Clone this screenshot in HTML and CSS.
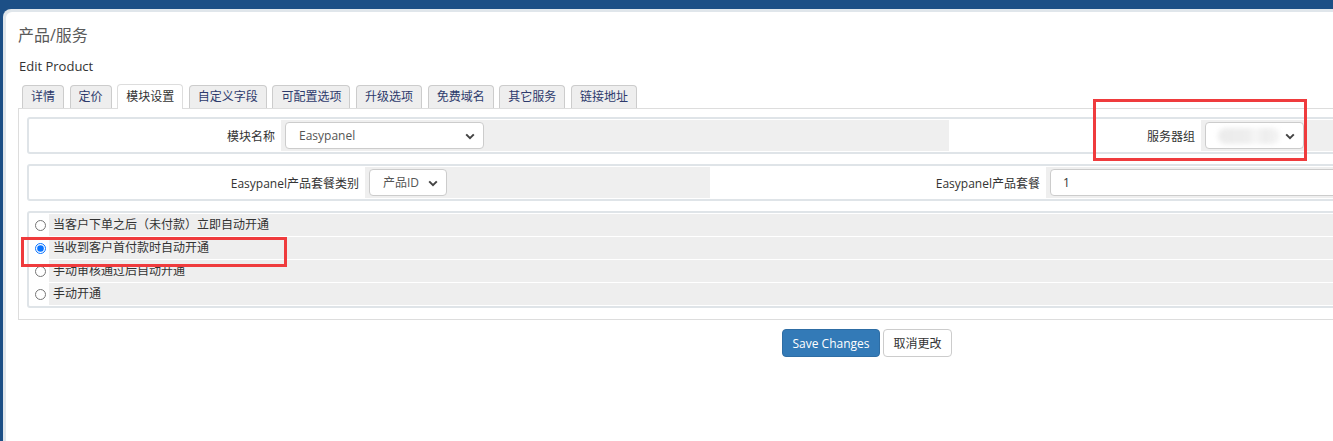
FILE: index.html
```html
<!DOCTYPE html>
<html>
<head>
    <title>产品/服务 - Edit Product</title>
    <link rel="stylesheet" href="styles.css">
</head>
<body>
    <div class="frame">
        <div class="content">
            <h1 class="page-title">产品/服务</h1>
            <h2 class="sub-title">Edit Product</h2>

            <ul class="tabs">
                <li class="tab">详情</li>
                <li class="tab">定价</li>
                <li class="tab active">模块设置</li>
                <li class="tab">自定义字段</li>
                <li class="tab">可配置选项</li>
                <li class="tab">升级选项</li>
                <li class="tab">免费域名</li>
                <li class="tab">其它服务</li>
                <li class="tab">链接地址</li>
            </ul>

            <div class="tab-panel">
                <div class="form-table module-row">
                    <div class="field-label">模块名称</div>
                    <div class="field-area">
                        <div class="select select-module">
                            <span>Easypanel</span>
                            <svg class="chevron" width="10" height="7" viewBox="0 0 10 7"><path d="M1.2 1.4 L5 5.2 L8.8 1.4" fill="none" stroke="#444" stroke-width="2"/></svg>
                        </div>
                    </div>
                    <div class="field-label">服务器组</div>
                    <div class="field-area">
                        <div class="select select-server">
                            <span class="blurred"></span>
                            <svg class="chevron" width="10" height="7" viewBox="0 0 10 7"><path d="M1.2 1.4 L5 5.2 L8.8 1.4" fill="none" stroke="#444" stroke-width="2"/></svg>
                        </div>
                    </div>
                </div>

                <div class="form-table config-row">
                    <div class="field-label">Easypanel产品套餐类别</div>
                    <div class="field-area">
                        <div class="select select-type">
                            <span>产品ID</span>
                            <svg class="chevron" width="10" height="7" viewBox="0 0 10 7"><path d="M1.2 1.4 L5 5.2 L8.8 1.4" fill="none" stroke="#444" stroke-width="2"/></svg>
                        </div>
                    </div>
                    <div class="field-label">Easypanel产品套餐</div>
                    <div class="field-area">
                        <div class="text-input">1</div>
                    </div>
                </div>

                <div class="form-table radio-table">
                    <div class="radio-cell"><input type="radio" name="autosetup"></div>
                    <div class="radio-text">当客户下单之后（未付款）立即自动开通</div>
                    <div class="radio-cell"><input type="radio" name="autosetup" checked></div>
                    <div class="radio-text">当收到客户首付款时自动开通</div>
                    <div class="radio-cell"><input type="radio" name="autosetup"></div>
                    <div class="radio-text">手动审核通过后自动开通</div>
                    <div class="radio-cell"><input type="radio" name="autosetup"></div>
                    <div class="radio-text">手动开通</div>
                </div>
            </div>

            <div class="button-row">
                <button class="btn btn-primary">Save Changes</button>
                <button class="btn btn-default">取消更改</button>
            </div>
        </div>
    </div>

    <div class="mark mark-server"></div>
    <div class="mark mark-radio"></div>
</body>
</html>
```

FILE: styles.css
```css
html, body {
    margin: 0;
    height: 100%;
}

body {
    position: relative;
    background-color: #1c4f86;
    font-family: "Open Sans", "Noto Sans CJK SC", sans-serif;
    font-size: 12px;
    color: #333;
    overflow: hidden;
}

.frame {
    margin: 9px 0 0 3px;
    padding: 3px 0 0 3px;
    background-color: #e0e6eb;
    border-top-left-radius: 8px;
    width: 1800px;
    height: 432px;
    box-sizing: border-box;
}

.content {
    background-color: #fff;
    border-top-left-radius: 6px;
    padding: 0 0 0 12px;
    height: 100%;
    box-sizing: border-box;
    overflow: hidden;
}

.page-title {
    margin: 13px 0 0 0;
    font-size: 16px;
    line-height: 20px;
    font-weight: normal;
    color: #5a5a5a;
}

.sub-title {
    margin: 12px 0 0 1px;
    font-size: 13px;
    line-height: 18px;
    font-weight: normal;
    color: #333;
}

.tabs {
    display: flex;
    list-style: none;
    margin: 10px 0 0 0;
    padding: 0 0 0 4px;
    height: 23px;
    align-items: flex-end;
}

.tab {
    height: 22px;
    line-height: 22px;
    padding: 0 8px;
    margin-right: 5.6px;
    background-color: #eee;
    border: 1px solid #ccc;
    border-bottom: none;
    border-radius: 4px 4px 0 0;
    color: #2d3a6c;
}

.tab.active {
    height: 24px;
    line-height: 24px;
    background-color: #fff;
    border-color: #ddd;
    color: #333;
    margin-bottom: -1px;
    position: relative;
}

.tab-panel {
    width: 1698px;
    border: 1px solid #ddd;
    padding: 8px 8px 11px 8px;
    box-sizing: border-box;
}

.form-table {
    display: grid;
    gap: 1px;
    padding: 1px;
    border: 2px solid #dfe4e8;
    border-radius: 3px;
    background-color: #fff;
    margin-bottom: 10px;
}

.form-table:last-child {
    margin-bottom: 0;
}

.module-row {
    grid-template-columns: 250px 668px 250px 1fr;
}

.config-row {
    grid-template-columns: 334px 345px 334px 1fr;
}

.field-label {
    height: 31px;
    display: flex;
    align-items: center;
    justify-content: flex-end;
    padding-right: 5px;
    background-color: #fff;
}

.field-area {
    height: 31px;
    display: flex;
    align-items: center;
    padding: 0 4px;
    background-color: #efefef;
}

.select, .text-input {
    position: relative;
    height: 27px;
    line-height: 25px;
    box-sizing: border-box;
    border: 1px solid #ccc;
    border-radius: 4px;
    background-color: #fff;
    padding-left: 13px;
    color: #555;
}

.chevron {
    position: absolute;
    right: 8px;
    top: 10px;
}

.select-module {
    width: 199px;
}

.select-server {
    width: 99px;
}

.select-type {
    width: 78px;
}

.text-input {
    width: 400px;
    padding-left: 12px;
    color: #333;
}

.blurred {
    position: absolute;
    left: 12px;
    top: 5px;
    width: 62px;
    height: 16px;
    border-radius: 8px;
    background: linear-gradient(90deg, #ebebeb 0%, #eeeeee 50%, #f7f7f7 60%, #ededed 75%, #f4f4f4 100%);
    filter: blur(2.5px);
}

.radio-table {
    grid-template-columns: 18px 1fr;
    grid-auto-rows: 22px;
}

.radio-cell {
    background-color: #fff;
    display: flex;
    align-items: center;
    justify-content: center;
}

.radio-cell input {
    width: 11px;
    height: 11px;
    margin: 0 0 0 2px;
    accent-color: #0a74ff;
}

.radio-text {
    background-color: #eee;
    line-height: 22px;
    padding-left: 4px;
}

.button-row {
    width: 1698px;
    display: flex;
    justify-content: center;
    gap: 3px;
    margin-top: 9px;
}

.btn {
    height: 28px;
    padding: 0;
    white-space: nowrap;
    font-family: "Open Sans", "Noto Sans CJK SC", sans-serif;
    font-size: 12px;
    border-radius: 4px;
    border: 1px solid #ccc;
    cursor: pointer;
}

.btn-primary {
    width: 98px;
    background-color: #337ab7;
    border-color: #2e6da4;
    color: #fff;
}

.btn-default {
    width: 69px;
    background-color: #fff;
    color: #333;
}

.mark {
    position: absolute;
    border: 3px solid #ef3b3d;
    box-sizing: border-box;
}

.mark-server {
    left: 1093px;
    top: 99px;
    width: 214px;
    height: 62px;
}

.mark-radio {
    left: 21px;
    top: 237px;
    width: 266px;
    height: 30px;
}
```
